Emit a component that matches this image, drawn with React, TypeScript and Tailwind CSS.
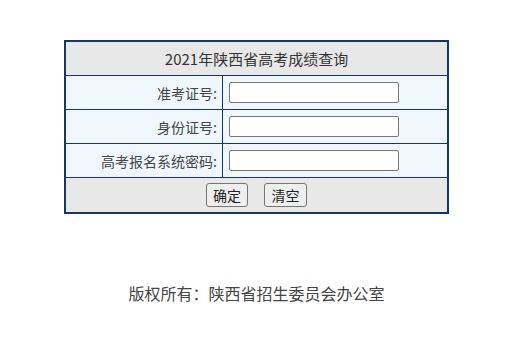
const rows = [
  {label: '准考证号:', name: 'zkzh'},
  {label: '身份证号:', name: 'sfzh'},
  {label: '高考报名系统密码:', name: 'mm'},
]

export default function App() {
  return (
    <div
      className="min-h-[341px] w-[523px] bg-white text-[#333]"
      style={{fontFamily: '"Noto Sans CJK SC", "Microsoft YaHei", sans-serif'}}
    >
      <div className="pt-[40px] pl-[64px]">
        <div className="w-[385px] border-2 border-[#17375e]">
          <div className="flex h-[33px] items-center justify-center bg-[#e8e8e8] text-[15px] leading-none">
            2021年陕西省高考成绩查询
          </div>

          {rows.map(({label, name}) => (
            <div key={name} className="flex h-[34px] border-t border-[#17375e] bg-[#eff7fd]">
              <div className="flex w-[157px] items-center justify-end border-r border-[#17375e] pr-[5px] text-[14px] leading-none text-[#444]">
                {label}
              </div>
              <div className="flex flex-1 items-center pl-[6px]">
                <input
                  name={name}
                  type="text"
                  className="h-[21px] w-[170px] rounded-[2px] border border-[#767676] bg-white outline-none"
                />
              </div>
            </div>
          ))}

          <div className="flex h-[35px] items-center justify-center gap-[16px] border-t border-[#17375e] bg-[#e8e8e8]">
            <button className="h-[24px] w-[42px] rounded-[3px] border border-[#767676] bg-[#efefef] text-[14px] leading-none text-[#222]">
              确定
            </button>
            <button className="h-[24px] w-[43px] rounded-[3px] border border-[#767676] bg-[#efefef] text-[14px] leading-none text-[#222]">
              清空
            </button>
          </div>
        </div>
      </div>

      <p className="mt-[71px] w-[513px] text-center text-[16px] leading-none text-[#444]">
        版权所有：陕西省招生委员会办公室
      </p>
    </div>
  )
}
